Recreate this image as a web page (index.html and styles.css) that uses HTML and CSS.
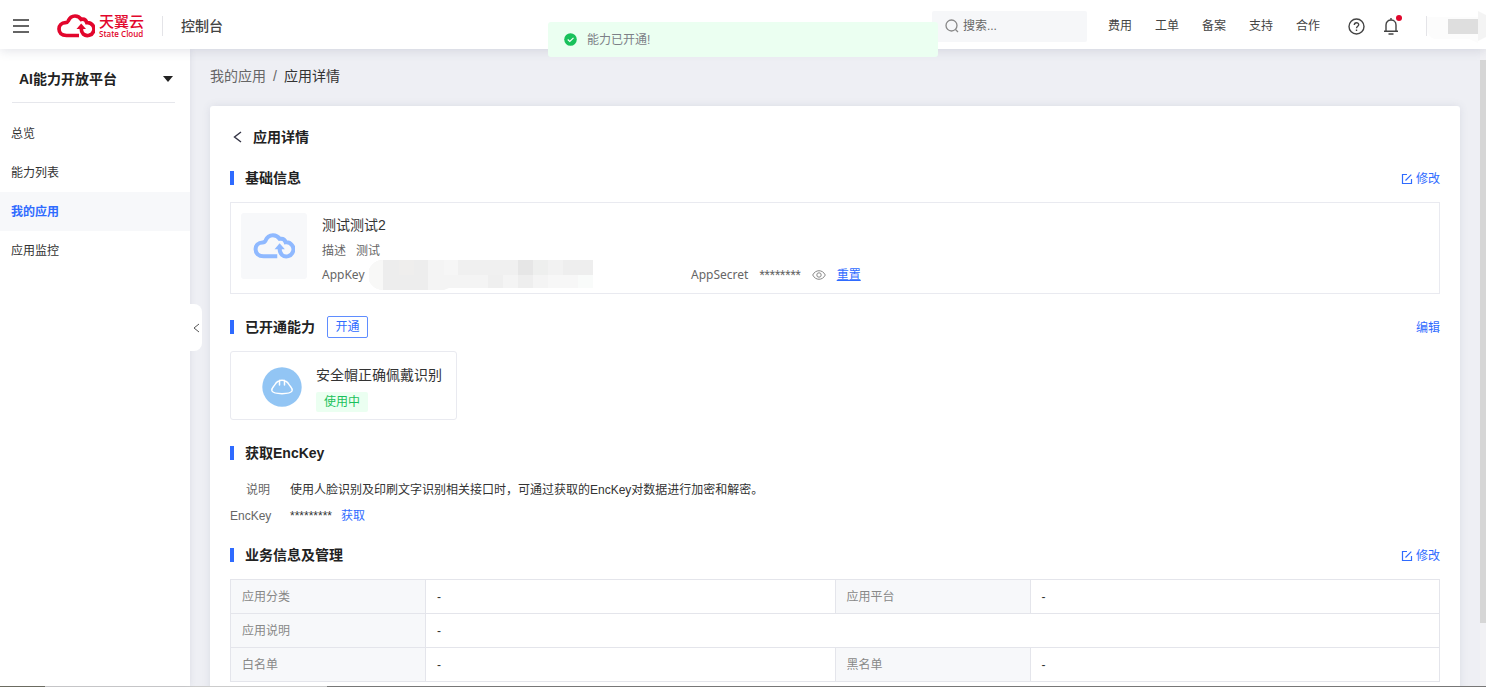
FILE: index.html
```html
<!DOCTYPE html>
<html lang="zh-CN">
<head>
<meta charset="utf-8">
<title>应用详情</title>
<link rel="stylesheet" href="styles.css">
</head>
<body>
<svg class="defs" aria-hidden="true">
  <symbol id="cloud" viewBox="0 0 38 24">
    <path d="M22 21.500H9.500C4.500 21.500 2 18.500 2 15C2 11.500 4.500 8.800 8.500 8.700C10 8.700 10.600 8.200 11.200 7C12.500 3.800 15 2 18 2C21 2 23 3.500 24.200 5.400C27 4.800 29 6 29.800 8.600A6.500 6.500 0 1 1 26.200 20Q24.200 18 24.200 14" fill="none" stroke="currentColor" stroke-width="3.700"/>
    <path d="M24.200 9.500L29 15H19.500Z" fill="currentColor"/>
  </symbol>
  <symbol id="edit" viewBox="0 0 12 12">
    <path d="M6 1.500H1.500V10.500H10.500V6M4.500 7.500L10.300 1.700" fill="none" stroke="currentColor" stroke-width="1.200"/>
  </symbol>
</svg>

<header class="topbar">
  <button class="icon-btn menu-btn" aria-label="菜单">
    <svg width="16" height="14" viewBox="0 0 16 14"><path d="M0 1H16M0 7H16M0 13H16" stroke="#333" stroke-width="1.500"/></svg>
  </button>
  <a class="logo" href="#">
    <svg width="38" height="24"><use href="#cloud"/></svg>
    <span class="logo-text"><span class="logo-cn">天翼云</span><span class="logo-en">State Cloud</span></span>
  </a>
  <span class="divider"></span>
  <a class="console" href="#">控制台</a>
  <label class="search">
    <svg width="14" height="14" viewBox="0 0 14 14" fill="none" stroke="#888" stroke-width="1.300"><circle cx="6.500" cy="6.500" r="5.500"/><path d="M10.500 10.500L13 13"/></svg>
    <input type="text" placeholder="搜索..." aria-label="搜索">
  </label>
  <nav class="top-nav">
    <a href="#">费用</a><a href="#">工单</a><a href="#">备案</a><a href="#">支持</a><a href="#">合作</a>
  </nav>
  <button class="icon-btn" aria-label="帮助">
    <svg width="17" height="17" viewBox="0 0 17 17" fill="none" stroke="#444" stroke-width="1.400"><circle cx="8.500" cy="8.500" r="7.500"/><path d="M6.300 7C6.300 4 10.800 4.200 10.700 6.800C10.600 8.200 8.500 8.300 8.500 10.200M8.500 11.400V12.900"/></svg>
  </button>
  <button class="icon-btn bell" aria-label="通知">
    <svg width="16" height="18" viewBox="0 0 16 18" fill="none" stroke="#444" stroke-width="1.400"><path d="M1 14.300H15M3 14V8C3 1.400 13 1.400 13 8V14M8 1V3M5.500 17H10.500"/></svg>
    <span class="dot"></span>
  </button>
  <span class="divider"></span>
  <svg class="account" width="59" height="34" viewBox="0 0 59 34" aria-hidden="true"><path d="M0 8H51V34L42 30H8Q0 28 0 18Z" fill="#fcfcfc"/><path d="M21 10H51V25H21Z" fill="#dedede"/><path d="M51 2L59 6V28L51 32Z" fill="#f4f4f4"/></svg>
</header>

<div class="toast" role="status">
  <svg width="13" height="13" viewBox="0 0 13 13"><circle cx="6.500" cy="6.500" r="6.300" fill="#19c15b"/><path d="M3.700 6.500L5.800 8.500L9.500 4.800" fill="none" stroke="#fff" stroke-width="1.100"/></svg>
  能力已开通!
</div>

<div class="layout">
  <aside class="sidebar">
    <button class="product">AI能力开放平台
      <svg width="10" height="6" viewBox="0 0 10 6"><path d="M0 0H10L5 6Z" fill="#222"/></svg>
    </button>
    <nav class="side-nav">
      <a href="#">总览</a>
      <a href="#">能力列表</a>
      <a href="#" class="active">我的应用</a>
      <a href="#">应用监控</a>
    </nav>
    <button class="collapse" aria-label="收起">
      <svg width="7" height="10" viewBox="0 0 7 10"><path d="M6 1L1 5L6 9" fill="none" stroke="#555"/></svg>
    </button>
  </aside>

  <main class="main">
    <nav class="crumbs"><a href="#">我的应用</a><span>/</span><span class="current">应用详情</span></nav>
    <div class="card">
      <div class="card-title">
        <button class="icon-btn" aria-label="返回"><svg width="9" height="12" viewBox="0 0 9 12"><path d="M8 1L1.500 6L8 11" fill="none" stroke="#334" stroke-width="1.400"/></svg></button>
        <h1>应用详情</h1>
      </div>

      <section>
        <div class="head"><h2>基础信息</h2><button class="link action"><svg width="12" height="12"><use href="#edit"/></svg>修改</button></div>
        <div class="app">
          <div class="app-icon"><svg width="42" height="26"><use href="#cloud"/></svg></div>
          <div class="app-info">
            <div class="app-name">测试测试2</div>
            <div class="app-desc"><span>描述</span><span>测试</span></div>
            <div class="keys">
              <div class="key">AppKey
                <svg class="mask" width="224" height="30" viewBox="0 0 224 30" aria-hidden="true">
                  <path d="M14 0H224V28H80L75 30H14A15 15 0 0 1 14 0Z" fill="#f4f4f4"/>
                  <path d="M14 0V30A15 15 0 0 1 14 0Z" fill="#f8f8f7"/>
                  <path d="M14 0H59V30H14Z" fill="#ededed"/><path d="M30 0H45V15H30Z" fill="#efeeed"/>
                  <path d="M75 0H89V15H75Z" fill="#f6f6f6"/><path d="M89 0H149V15H89Z" fill="#f0f0f0"/>
                  <path d="M149 0H164V15H149Z" fill="#e6e6e6"/><path d="M164 0H179V15H164Z" fill="#eeefee"/>
                  <path d="M179 0H194V15H179Z" fill="#f2f2f2"/><path d="M194 0H224V15H194Z" fill="#eeeeee"/>
                  <path d="M119 15H134V28H119Z" fill="#efefef"/><path d="M149 15H164V28H149Z" fill="#eeeeee"/><path d="M179 15H209V28H179Z" fill="#f7f7f7"/><path d="M209 15H224V28H209Z" fill="#f9fbfa"/>
                </svg>
              </div>
              <div class="secret">AppSecret<span class="stars">********</span>
                <button class="icon-btn" aria-label="显示"><svg width="14" height="10" viewBox="0 0 14 10" fill="none" stroke="#888"><path d="M.7 5C3.500-.7 10.500-.7 13.300 5C10.500 10.700 3.500 10.700.7 5Z"/><circle cx="7" cy="5" r="2.200"/></svg></button>
                <a class="link reset" href="#">重置</a>
              </div>
            </div>
          </div>
        </div>
      </section>

      <section>
        <div class="head"><h2>已开通能力</h2><button class="open-btn">开通</button><button class="link action">编辑</button></div>
        <div class="ability">
          <svg width="40" height="40" viewBox="0 0 40 40"><circle cx="20" cy="20" r="19.700" fill="#92c5f4"/><path d="M10 24C9 21 12 19.500 13 17.500C15 14 18 13.300 20 13.300C22 13.300 25 14 27 17.500C28 19.500 31 21 30 24C28 27.500 12 27.500 10 24ZM17.500 13.500V18M22.500 13.500V18" fill="none" stroke="#fff" stroke-width="1.500" stroke-linecap="round" stroke-linejoin="round"/></svg>
          <div><div class="ability-name">安全帽正确佩戴识别</div><span class="tag">使用中</span></div>
        </div>
      </section>

      <section>
        <div class="head"><h2>获取EncKey</h2></div>
        <dl class="enc">
          <dt>说明</dt><dd>使用人脸识别及印刷文字识别相关接口时，可通过获取的EncKey对数据进行加密和解密。</dd>
          <dt>EncKey</dt><dd>*********<a class="link" href="#">获取</a></dd>
        </dl>
      </section>

      <section>
        <div class="head"><h2>业务信息及管理</h2><button class="link action"><svg width="12" height="12"><use href="#edit"/></svg>修改</button></div>
        <table class="info">
          <colgroup><col class="label-col"><col><col class="label-col"><col></colgroup>
          <tr><th scope="row">应用分类</th><td>-</td><th scope="row">应用平台</th><td>-</td></tr>
          <tr><th scope="row">应用说明</th><td colspan="3">-</td></tr>
          <tr><th scope="row">白名单</th><td>-</td><th scope="row">黑名单</th><td>-</td></tr>
        </table>
      </section>
    </div>
  </main>
  <div class="scroll"><div class="thumb"></div></div>
</div>
<div class="edge"></div>
</body>
</html>
```
FILE: styles.css
```css
* { box-sizing: border-box; }
body {
  margin: 0;
  height: 100vh;
  overflow: hidden;
  display: flex;
  flex-direction: column;
  background: #eeeff4;
  color: #333;
  font: 12px/20px "Liberation Sans", "Noto Sans CJK SC", sans-serif;
}
a { color: inherit; text-decoration: none; }
button, input { font: inherit; color: inherit; border: 0; padding: 0; background: none; }
svg { flex: none; }
h1, h2 { margin: 0; font-size: 14px; line-height: 24px; color: #222; }
.defs { position: absolute; width: 0; height: 0; }
.icon-btn { display: flex; align-items: center; }

.topbar {
  position: relative;
  z-index: 2;
  flex: none;
  display: flex;
  align-items: center;
  height: 49px;
  padding: 3px 0 0 13px;
  background: #fff;
  box-shadow: 0 2px 10px rgba(80, 90, 120, .16);
}
.logo { display: flex; align-items: center; gap: 4px; margin: 0 20px 0 28px; color: #e2062c; }
.logo-text { display: flex; flex-direction: column; width: 43px; }
.logo-cn { font-size: 15px; line-height: 16px; font-weight: 500; white-space: nowrap; }
.logo-en { font: 600 8px/8px "Open Sans", sans-serif; white-space: nowrap; }
.divider { width: 1px; height: 20px; background: #e4e4e8; }
.console { margin-left: 18px; font-size: 14px; font-weight: 500; color: #444; }
.search {
  display: flex;
  align-items: center;
  gap: 4px;
  width: 155px;
  height: 31px;
  margin-left: auto;
  padding: 0 13px;
  border-radius: 2px;
  background: #f6f7f9;
}
.search input { width: 100%; min-width: 0; outline: 0; }
.search input::placeholder { color: #666; opacity: 1; }
.top-nav { display: flex; gap: 23px; margin: 0 28px 0 21px; color: #444; }
.bell { position: relative; margin: 0 27px 0 18px; }
.dot { position: absolute; top: -2px; right: -3px; width: 6px; height: 6px; border-radius: 50%; background: #e0062c; }

.toast {
  position: fixed;
  z-index: 3;
  top: 22px;
  left: 50%;
  transform: translateX(-50%);
  display: flex;
  align-items: center;
  gap: 10px;
  width: 390px;
  height: 35px;
  padding: 0 16px;
  border-radius: 3px;
  background: #ebfff1;
  color: #7c8087;
}

.layout { flex: 1; min-height: 0; display: flex; }
.sidebar { position: relative; flex: none; width: 190px; background: #fff; box-shadow: 0 0 6px rgba(80, 90, 120, .12); }
.product {
  display: flex;
  align-items: center;
  justify-content: space-between;
  width: 163px;
  height: 54px;
  margin: 0 0 11px 12px;
  padding: 7px 2px 0 7px;
  border-bottom: 1px solid #e6e7ec;
  font-size: 14px;
  font-weight: 700;
  color: #222;
}
.side-nav a { display: block; padding: 1px 0 0 11px; line-height: 38px; }
.side-nav .active { background: #f7f8fa; color: #2f6bff; font-weight: 700; }
.collapse {
  position: absolute;
  left: 100%;
  top: 255px;
  display: flex;
  align-items: center;
  width: 12px;
  height: 47px;
  padding-left: 3px;
  border-radius: 0 8px 8px 0;
  background: #fff;
}

.main { flex: 1; min-width: 0; display: flex; flex-direction: column; padding: 0 20px; overflow: hidden; }
.crumbs { display: flex; gap: 7px; padding: 15px 0 18px; font-size: 14px; line-height: 24px; color: #666; }
.crumbs .current { color: #333; }
.card { flex: 1 0 auto; padding: 19px 20px 5px; border-radius: 3px 3px 0 0; background: #fff; box-shadow: 0 0 8px rgba(80, 90, 120, .12); }
.card-title { display: flex; align-items: center; gap: 11px; padding: 0 3px; margin-bottom: 17px; }

.head { display: flex; align-items: center; margin-bottom: 12px; }
.head h2::before { content: ""; display: inline-block; width: 4px; height: 14px; margin-right: 11px; vertical-align: -2px; background: #2f6bff; }
.link { color: #2f6bff; }
.action { display: flex; align-items: center; gap: 3px; margin-left: auto; padding-top: 2px; }
section { margin-bottom: 21px; }

.app { display: flex; gap: 15px; padding: 10px 10px 7px; border: 1px solid #e9eaf0; }
.app-icon { display: flex; align-items: center; justify-content: center; width: 66px; height: 66px; border-radius: 3px; background: #f7f8fa; color: #8fb9ff; }
.app-info { flex: 1; color: #666; }
.app-name { font-size: 14px; line-height: 25px; color: #333; }
.app-desc { display: flex; gap: 10px; line-height: 26px; }
.keys { display: flex; font-family: "Noto Sans", "Noto Sans CJK SC", sans-serif; line-height: 22px; }
.key { flex: 0 1 369px; display: flex; align-items: center; gap: 4px; }
.mask { margin: -4px 0; }
.secret { display: flex; align-items: center; gap: 11px; }
.stars { font-family: Roboto, sans-serif; }
.reset { text-decoration: underline; }

.open-btn { width: 41px; height: 22px; margin-left: 12px; border: 1px solid #5f8dff; border-radius: 2px; color: #2f6bff; }
.ability { display: inline-flex; align-items: center; gap: 14px; padding: 9px 14px 7px 31px; border: 1px solid #e9eaf0; border-radius: 3px; vertical-align: top; }
.ability-name { margin-bottom: 3px; font-size: 14px; line-height: 28px; }
.tag { display: block; width: 52px; text-align: center; border-radius: 2px; background: #ebfff1; color: #19c15b; }

.enc { display: grid; grid-template-columns: 40px 1fr; gap: 6px 20px; margin: 0 0 -4px; padding-top: 3px; }
.enc dt { text-align: right; color: #666; }
.enc dd { margin: 0; }
.enc .link { margin-left: 9px; }

.info { width: 100%; table-layout: fixed; border-collapse: collapse; }
.label-col { width: 195px; }
.info th, .info td { height: 34px; padding: 0 12px 0 11px; border: 1px solid #e4e5eb; text-align: left; font-weight: 400; }
.info th { background: #f7f8fa; color: #888; }

.scroll { flex: none; width: 6px; padding-top: 11px; background: #f1f1f4; }
.thumb { height: 90%; background: #d6d6d6; }
.edge { flex: none; height: 1px; background: linear-gradient(90deg, #6d6d60 0 3%, #ccc 3% 22%, #777 22%); }
```
